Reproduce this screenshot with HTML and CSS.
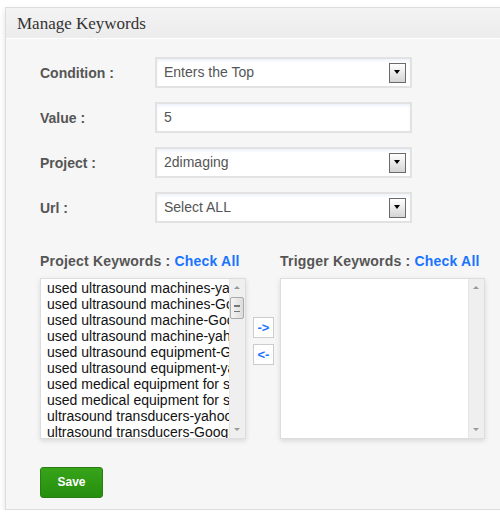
FILE: index.html
```html
<!DOCTYPE html>
<html>
	<head>
		<meta charset="utf-8" />
		<title>Manage Keywords</title>
		<link rel="stylesheet" href="styles.css">
	</head>
	<body>
		<div class="panel">
			<div class="panel-head">Manage Keywords</div>
			<div class="panel-body">
				<div class="row">
					<label class="label">Condition :</label>
					<div class="field select">Enters the Top<span class="drop"></span></div>
				</div>
				<div class="row">
					<label class="label">Value :</label>
					<div class="field">5</div>
				</div>
				<div class="row">
					<label class="label">Project :</label>
					<div class="field select">2dimaging<span class="drop"></span></div>
				</div>
				<div class="row">
					<label class="label">Url :</label>
					<div class="field select">Select ALL<span class="drop"></span></div>
				</div>

				<div class="lists">
					<div class="col">
						<div class="col-title">Project Keywords : <a href="javascript:;">Check All</a></div>
						<div class="listbox">
							<ul class="items">
								<li>used ultrasound machines-yahoo</li>
								<li>used ultrasound machines-Google</li>
								<li>used ultrasound machine-Google</li>
								<li>used ultrasound machine-yahoo</li>
								<li>used ultrasound equipment-Google</li>
								<li>used ultrasound equipment-yahoo</li>
								<li>used medical equipment for sale-yahoo</li>
								<li>used medical equipment for sale-Google</li>
								<li>ultrasound transducers-yahoo</li>
								<li>ultrasound transducers-Google</li>
							</ul>
							<div class="scroll">
								<span class="up"></span>
								<span class="thumb"></span>
								<span class="down"></span>
							</div>
						</div>
					</div>
					<div class="moves">
						<a class="move" href="javascript:;">-&gt;</a>
						<a class="move" href="javascript:;">&lt;-</a>
					</div>
					<div class="col">
						<div class="col-title">Trigger Keywords : <a href="javascript:;">Check All</a></div>
						<div class="listbox">
							<ul class="items"></ul>
							<div class="scroll">
								<span class="up"></span>
								<span class="down"></span>
							</div>
						</div>
					</div>
				</div>

				<a class="save" href="javascript:;">Save</a>
			</div>
		</div>
	</body>
</html>
```

FILE: styles.css
```css
*{margin: 0;padding: 0;text-decoration: none;box-sizing: border-box;}
body{background: #fff;font-family: "Liberation Sans", Arial, sans-serif;}

.panel{
	margin: 7px 0 0 5px;
	width: 500px;
	border: 1px solid #ddd;
	border-right: none;
	background: #f6f6f6;
	box-shadow: 0 3px 6px rgba(0,0,0,.12);
}
.panel-head{
	height: 31px;
	padding-left: 11px;
	line-height: 31px;
	font-family: "Liberation Serif", Georgia, serif;
	font-size: 17px;
	color: #333;
	background: linear-gradient(#f3f3f3, #ececec);
	border-bottom: 1px solid #fff;
}
.panel-body{
	padding: 18px 0 11px 34px;
}

.row{
	display: flex;
	align-items: center;
	height: 31px;
	margin-bottom: 14px;
}
.label{
	width: 115px;
	font-size: 14px;
	font-weight: bold;
	color: #555;
}
.field{
	position: relative;
	width: 257px;
	height: 31px;
	padding-left: 7px;
	line-height: 27px;
	font-size: 14px;
	color: #555;
	background: #fff;
	border: 2px solid #e2e2e2;
	box-shadow: inset 0 2px 3px #eef3fb;
}
.drop{
	position: absolute;
	right: 4px;
	top: 4px;
	width: 17px;
	height: 20px;
	border: 1px solid #6a6a6a;
	background: linear-gradient(#fff, #d4d4d4);
}
.drop:after{
	content: "";
	position: absolute;
	left: 4px;
	top: 6px;
	border-left: 3.5px solid transparent;
	border-right: 3.5px solid transparent;
	border-top: 4px solid #000;
}

.lists{
	display: flex;
	margin-top: 30px;
}
.col-title{
	height: 25px;
	line-height: 16px;
	font-size: 14px;
	font-weight: bold;
	letter-spacing: .2px;
	color: #555;
	white-space: nowrap;
}
.col-title a{color: #1a73ff;}
.listbox{
	display: flex;
	width: 206px;
	height: 161px;
	background: #fff;
	border: 1px solid #ddd;
	box-shadow: 0 2px 5px rgba(0,0,0,.12);
	overflow: hidden;
}
.col:last-child .listbox{width: 205px;}
.items{
	flex: 1;
	list-style: none;
	padding: 1px 0 0 6px;
	overflow: hidden;
}
.items li{
	height: 16px;
	line-height: 16px;
	font-size: 14px;
	color: #111;
	white-space: nowrap;
	overflow: hidden;
}
.scroll{
	position: relative;
	width: 16px;
	flex: none;
	background: #efefef;
	border-left: 1px solid #e6e6e6;
}
.up, .down{
	position: absolute;
	left: 4px;
	border-left: 3px solid transparent;
	border-right: 3px solid transparent;
}
.up{top: 7px;border-bottom: 3px solid #999;}
.down{bottom: 7px;border-top: 3px solid #999;}
.thumb{
	position: absolute;
	left: 0;
	top: 18px;
	width: 14px;
	height: 22px;
	border: 1px solid #aaa;
	border-radius: 2px;
	background: linear-gradient(90deg, #f4f4f4, #dcdcdc);
}
.thumb:after{
	content: "";
	position: absolute;
	left: 3px;
	top: 7px;
	width: 6px;
	height: 5px;
	border-top: 1px solid #777;
	border-bottom: 1px solid #777;
	box-shadow: inset 0 2px 0 -1px #777;
}

.moves{
	display: flex;
	flex-direction: column;
	gap: 6px;
	margin: 64px 6px 0 7px;
}
.move{
	display: block;
	width: 21px;
	height: 21px;
	line-height: 19px;
	text-align: center;
	font-size: 13px;
	font-weight: bold;
	color: #1a73ff;
	background: #fff;
	border: 1px solid #ccc;
}

.save{
	display: block;
	margin-top: 28px;
	width: 63px;
	height: 31px;
	line-height: 29px;
	text-align: center;
	font-size: 12px;
	font-weight: bold;
	color: #fff;
	background: linear-gradient(#37a41a, #268e0d);
	border: 1px solid #2a7d12;
	border-radius: 3px;
}
```
